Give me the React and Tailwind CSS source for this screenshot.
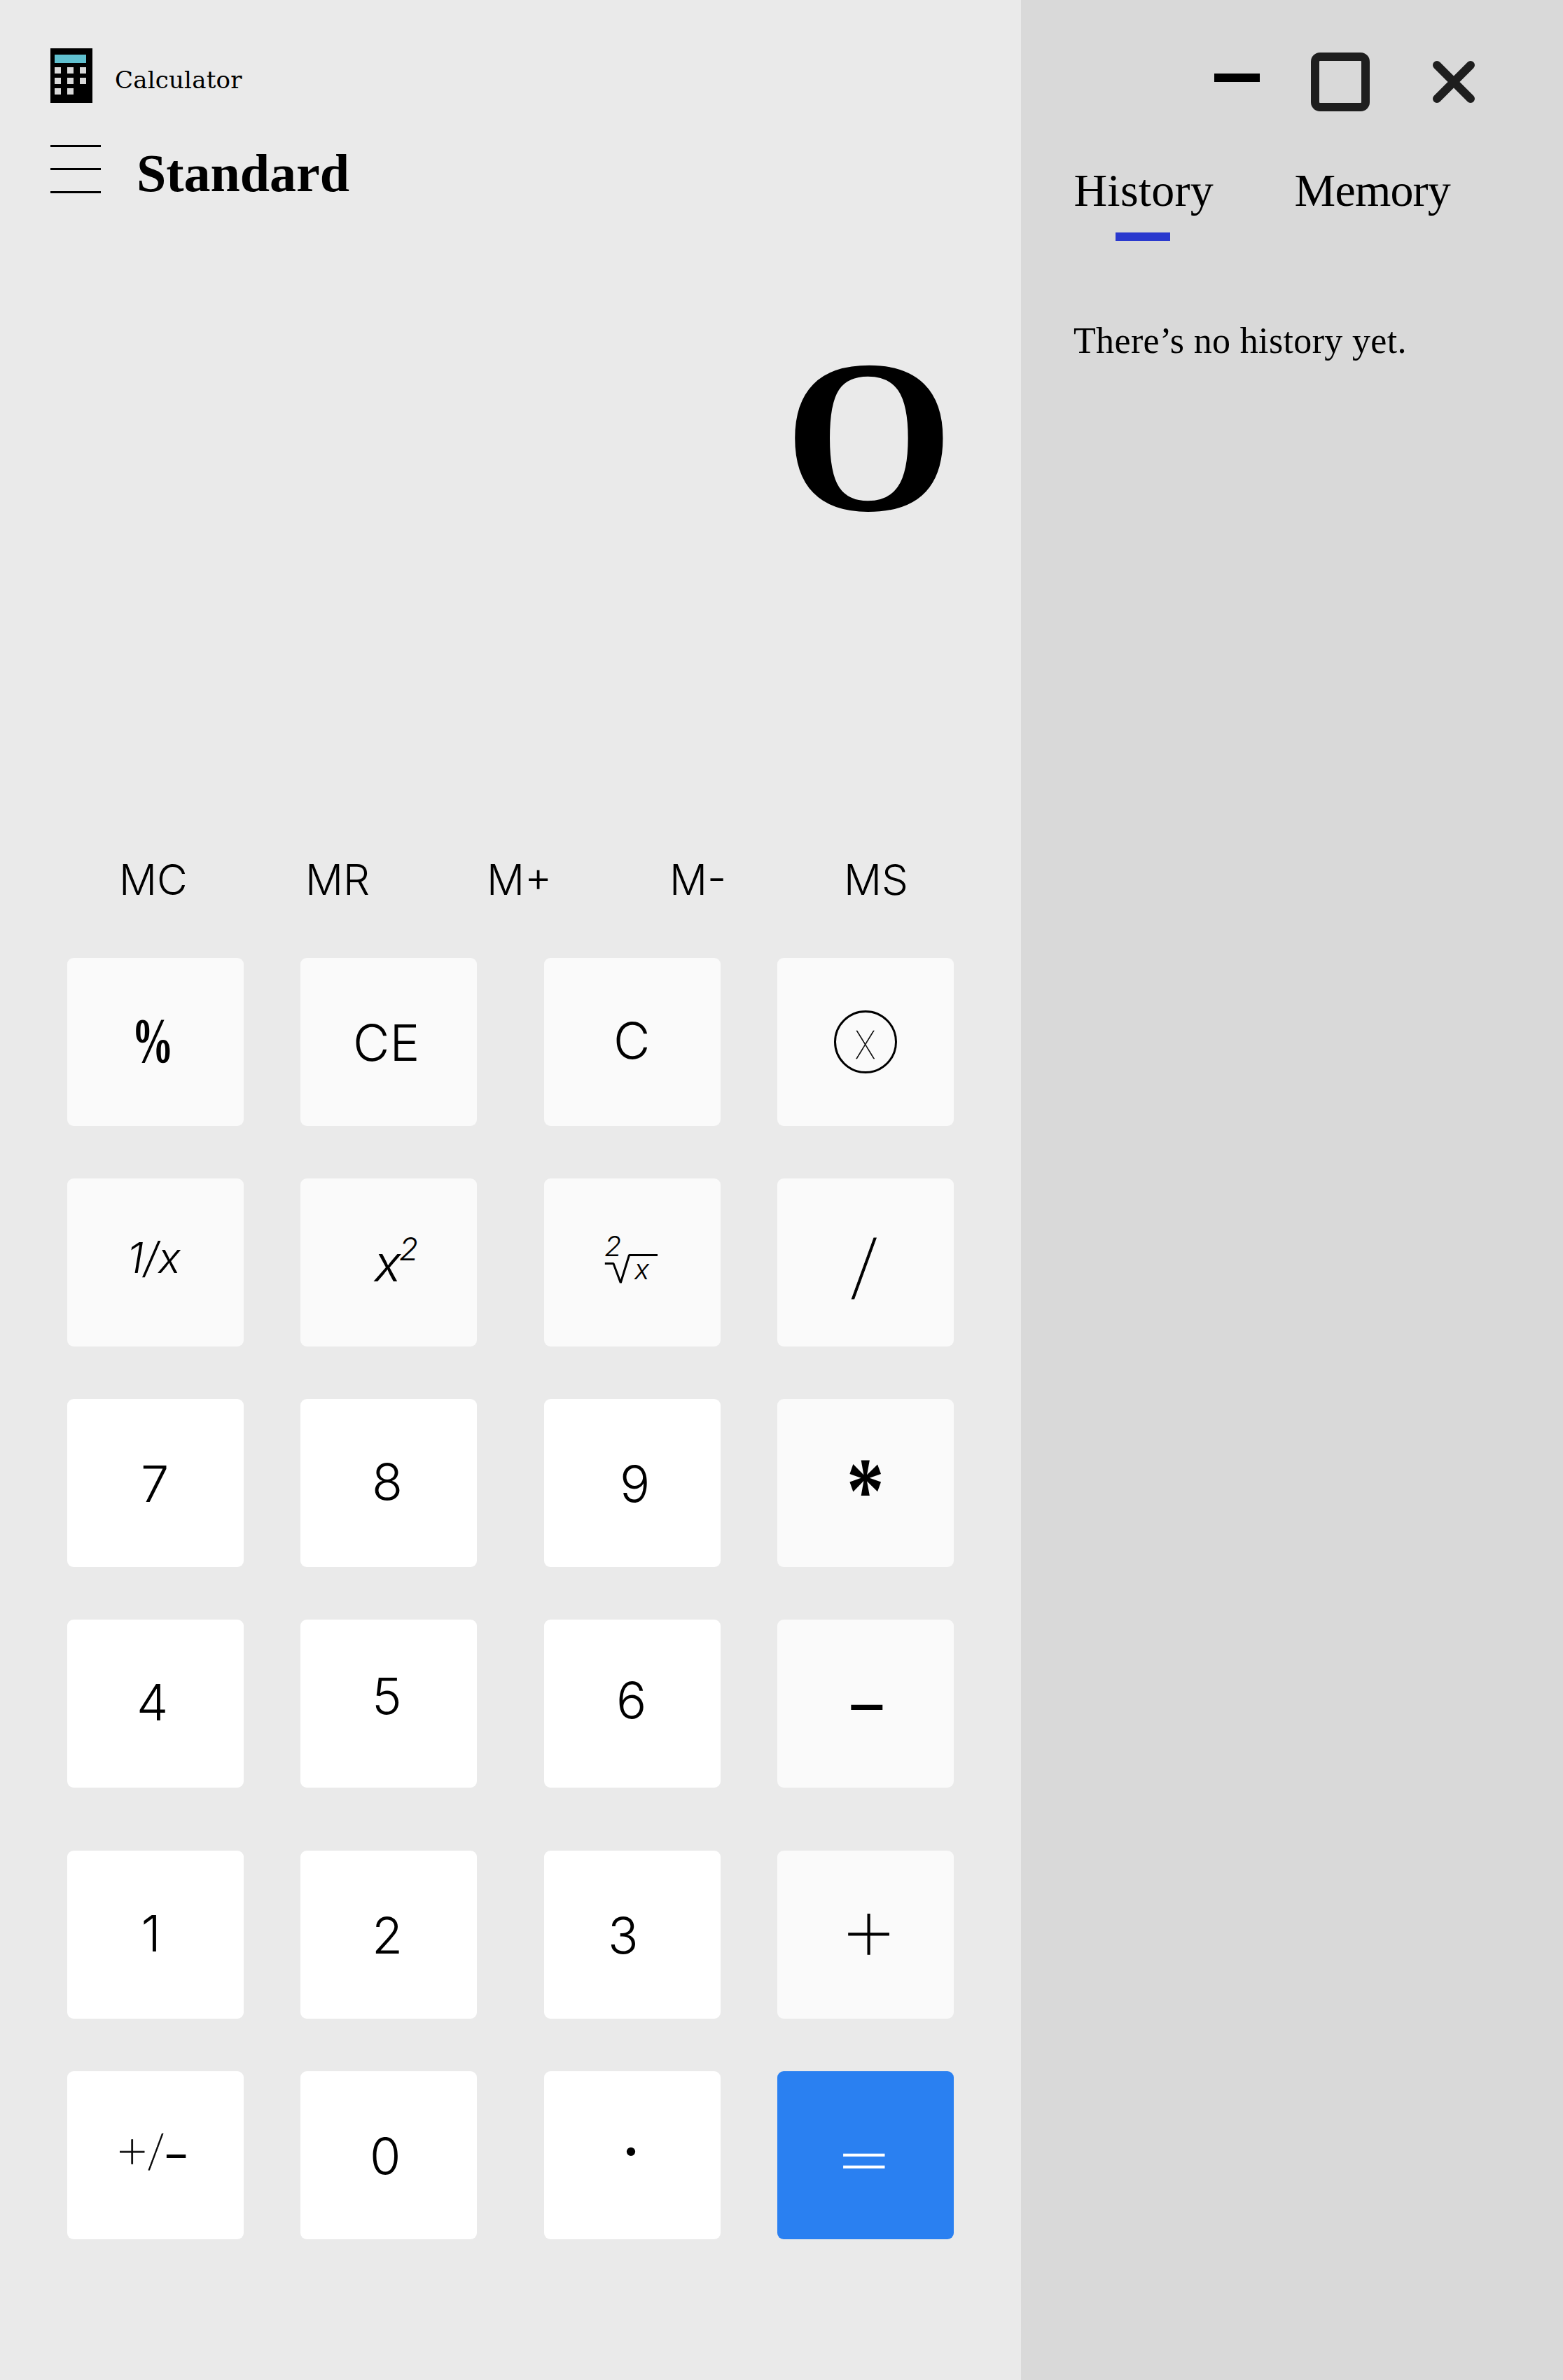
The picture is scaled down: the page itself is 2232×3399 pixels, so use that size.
import React from "react";

const light72 = "font-['Inter',sans-serif] font-light text-[72px] leading-[87px]";
const serif = "font-['Liberation_Serif',serif]";

function Key({ tone = "bg-white", className = "", children }) {
  return (
    <button
      type="button"
      className={`flex h-[240px] w-[252px] items-start overflow-hidden rounded-[9px] text-left whitespace-nowrap text-black ${tone} ${className}`}
    >
      {children}
    </button>
  );
}

function Row({ className = "", children }) {
  return (
    <div className={`grid grid-cols-[252px_252px_252px_252px] pl-[96px] ${className}`}>
      {children}
    </div>
  );
}

const soft = "bg-[#fafafa]";
const col2 = "ml-[81px]";
const col3 = "ml-[177px]";
const col4 = "ml-[258px]";

function CalculatorIcon() {
  return (
    <svg width="60" height="78" viewBox="0 0 60 78" aria-hidden="true">
      <rect width="60" height="78" fill="#000" />
      <rect x="6" y="9" width="45" height="12" fill="#60c0cf" />
      {[
        [6, 27], [24, 27], [42, 27],
        [6, 42], [24, 42], [42, 42],
        [6, 57], [24, 57],
      ].map(([x, y]) => (
        <rect key={`${x}-${y}`} x={x} y={y} width="9" height="9" fill="#d9d9d9" />
      ))}
    </svg>
  );
}

function Keypad() {
  return (
    <div className="mt-[76px]">
      <Row>
        <Key tone={soft}>
          <span className={`mt-[67px] ml-[92px] origin-top-left scale-x-[0.652] text-[92px] leading-[102px] font-bold ${serif}`}>%</span>
        </Key>
        <Key tone={soft} className={col2}>
          <span className={`mt-[77px] ml-[75px] ${light72}`}>CE</span>
        </Key>
        <Key tone={soft} className={col3}>
          <span className={`mt-[74px] ml-[99px] ${light72}`}>C</span>
        </Key>
        <Key tone={soft} className={col4}>
          <span className="mt-[75px] ml-[81px] flex size-[90px] rounded-full border-[3px] border-black">
            <span className="mt-[14px] ml-[27px] h-[65px] origin-top-left scale-x-[0.874] font-['Inter',sans-serif] text-[54px] leading-[65px] font-thin [-webkit-text-stroke:0.5px_black]">X</span>
          </span>
        </Key>
      </Row>

      <Row className="mt-[75px]">
        <Key tone={soft}>
          <span className="mt-[77px] ml-[85.5px] font-['Inter',sans-serif] text-[60px] leading-[72px] font-light italic">1/x</span>
        </Key>
        <Key tone={soft} className={col2}>
          <span className={`mt-[77px] ml-[105.5px] italic ${light72}`}>x</span>
          <span className="mt-[73px] ml-[-3px] font-['Inter',sans-serif] text-[45px] leading-[55px] font-light italic">2</span>
        </Key>
        <Key tone={soft} className={col3}>
          <span className="mt-[72px] ml-[86px] grid font-['Inter',sans-serif] text-[40px] leading-[49px] font-light italic">
            <span className="col-start-1 row-start-1">2</span>
            <svg className="col-start-1 row-start-1" width="80" height="82" viewBox="0 0 80 82" aria-hidden="true">
              <path d="M0.8 49.5H13L23.3 77L35.5 37.5H76" fill="none" stroke="#000" strokeWidth="3" strokeLinejoin="bevel" />
            </svg>
            <span className="col-start-1 row-start-1 mt-[33px] ml-[43px]">x</span>
          </span>
        </Key>
        <Key tone={soft} className={col4}>
          <span className="mt-[64px] ml-[102px] origin-top-left scale-x-[1.35] font-['Inter',sans-serif] text-[100px] leading-[121px] font-thin [-webkit-text-stroke:0.8px_black]">/</span>
        </Key>
      </Row>

      <Row className="mt-[75px]">
        <Key><span className={`mt-[77px] ml-[105px] ${light72}`}>7</span></Key>
        <Key className={col2}><span className={`mt-[74px] ml-[102px] ${light72}`}>8</span></Key>
        <Key className={col3}><span className={`mt-[77px] ml-[108px] ${light72}`}>9</span></Key>
        <Key tone={soft} className={col4}>
          <span className={`mt-[58px] ml-[99px] origin-top-left scale-y-[1.24] text-[107px] leading-[118px] font-bold ${serif}`}>*</span>
        </Key>
      </Row>

      <Row className="mt-[75px]">
        <Key><span className={`mt-[74px] ml-[99px] ${light72}`}>4</span></Key>
        <Key className={col2}><span className={`mt-[65px] ml-[102px] ${light72}`}>5</span></Key>
        <Key className={col3}><span className={`mt-[71px] ml-[103px] ${light72}`}>6</span></Key>
        <Key tone={soft} className={col4}>
          <span className={`mt-[70px] ml-[99px] origin-top-left scale-x-[2.06] text-[84px] leading-[93px] font-bold ${serif}`}>-</span>
        </Key>
      </Row>

      <Row className="mt-[90px]">
        <Key><span className={`mt-[74px] ml-[105.5px] ${light72}`}>1</span></Key>
        <Key className={col2}><span className={`mt-[77px] ml-[102px] ${light72}`}>2</span></Key>
        <Key className={col3}><span className={`mt-[77px] ml-[91px] ${light72}`}>3</span></Key>
        <Key tone={soft} className={col4}>
          <span className="mt-[23px] ml-[86px] font-['Inter',sans-serif] text-[140px] leading-[170px] font-thin [-webkit-text-stroke:1px_black]">+</span>
        </Key>
      </Row>

      <Row className="mt-[75px]">
        <Key>
          <span className="mt-[58px] ml-[66px] w-[47px] font-['Inter',sans-serif] text-[84px] leading-[101px] font-thin tracking-[-9px] [-webkit-text-stroke:0.8px_black]">+</span>
          <span className="mt-[77px] w-[27px] origin-top-left scale-x-[1.39] font-['Inter',sans-serif] text-[60px] leading-[72px] font-thin [-webkit-text-stroke:0.3px_black]">/</span>
          <span className={`mt-[82px] ml-[-2px] origin-top-left scale-x-[1.76] text-[60px] leading-[66px] font-bold ${serif}`}>-</span>
        </Key>
        <Key className={col2}><span className={`mt-[77px] ml-[99px] ${light72}`}>0</span></Key>
        <Key className={col3}>
          <span className={`mt-[52px] ml-[114.5px] text-[76px] leading-[84px] font-bold ${serif}`}>.</span>
        </Key>
        <Key tone="bg-[#2a80f1]" className={col4}>
          <span className="mt-[71px] ml-[73px] origin-top-left scale-x-[1.64] scale-y-[0.87] font-['Inter',sans-serif] text-[96px] leading-[116px] font-extralight text-white [-webkit-text-stroke:0.4px_white]">=</span>
        </Key>
      </Row>
    </div>
  );
}

export default function App() {
  return (
    <div className="flex h-[3399px] w-[2232px] overflow-hidden text-black">
      <main className="w-[1458px] shrink-0 bg-[#eaeaea]">
        <header className="flex h-[147px] items-start pt-[69px] pl-[72px]">
          <CalculatorIcon />
          <span className="mt-[25px] ml-[32px] font-['DejaVu_Serif',serif] text-[34px] leading-[40px] tracking-[0.2px]">Calculator</span>
        </header>
        <div className="mt-[58px] flex items-start pl-[72px]">
          <button type="button" aria-label="Menu" className="mt-[2px] flex w-[72px] flex-col gap-[30px]">
            <span className="h-[3px] w-full bg-black" />
            <span className="h-[3px] w-full bg-black" />
            <span className="h-[3px] w-full bg-black" />
          </button>
          <h1 className={`ml-[51px] text-[76px] leading-[84px] font-bold ${serif}`}>Standard</h1>
        </div>

        <div className="mt-[167px] flex h-[336px]">
          <output className={`ml-[1120px] origin-top-left scale-x-[1.59] text-[304px] leading-[336px] [-webkit-text-stroke:4px_black] ${serif}`}>0</output>
        </div>

        <div className="mt-[428px] flex pl-[170px] font-['Inter',sans-serif] text-[60px] leading-[72px] font-light">
          <span className="w-[266px]">MC</span>
          <span className="w-[259px]">MR</span>
          <span className="w-[261px]">M+</span>
          <span className="w-[249px]">M-</span>
          <span>MS</span>
        </div>

        <Keypad />
      </main>

      <aside className="flex-1 bg-[#d9d9d9] pt-[75px]">
        <div className="flex h-[84px] items-start">
          <span className="mt-[30px] ml-[276px] h-[12px] w-[65px] bg-black" />
          <svg className="ml-[73px]" width="84" height="84" viewBox="0 0 84 84" aria-hidden="true">
            <rect x="6" y="6" width="72" height="72" rx="7" fill="none" stroke="#1e1e1e" strokeWidth="12" />
          </svg>
          <svg className="mt-[12px] ml-[90px]" width="60" height="60" viewBox="0 0 60 60" aria-hidden="true">
            <path d="M6 6L54 54M54 6L6 54" stroke="#1e1e1e" strokeWidth="12" strokeLinecap="round" />
          </svg>
        </div>
        <nav className={`mt-[76px] flex pl-[75.5px] text-[66px] leading-[73px] ${serif}`}>
          <span className="w-[315px] tracking-[0.2px]">History</span>
          <span className="tracking-[-0.8px]">Memory</span>
        </nav>
        <div className="mt-[24px] ml-[135px] h-[12px] w-[78px] bg-[#2a39ce]" />
        <p className={`mt-[114px] ml-[75px] text-[52px] leading-[57px] tracking-[0.35px] ${serif}`}>There’s no history yet.</p>
      </aside>
    </div>
  );
}
